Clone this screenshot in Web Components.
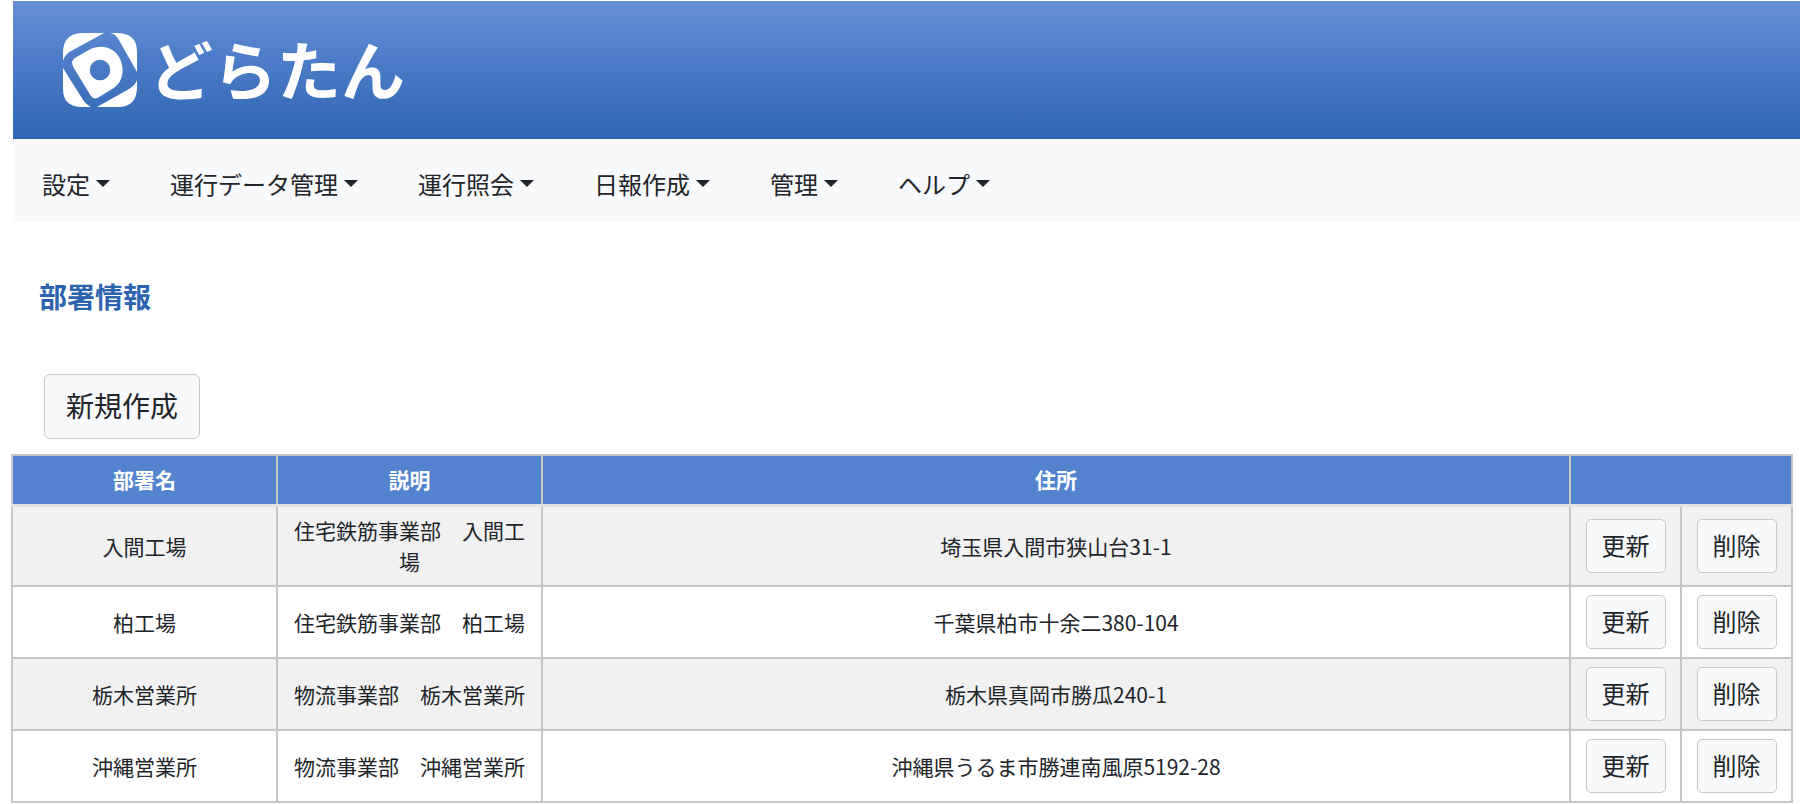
<!DOCTYPE html>
<html lang="ja">
<head>
<meta charset="utf-8">
<title>部署情報 - どらたん</title>
<style>
  body {
    margin: 0;
    background: #fff;
    color: #212529;
    font-family: "Noto Sans CJK JP", sans-serif;
    font-size: 21px;
  }
</style>
</head>
<body>
<dora-app>
  <dora-header slot="header"></dora-header>
  <dora-nav slot="nav">
    <dora-menu>設定</dora-menu>
    <dora-menu>運行データ管理</dora-menu>
    <dora-menu>運行照会</dora-menu>
    <dora-menu>日報作成</dora-menu>
    <dora-menu>管理</dora-menu>
    <dora-menu>ヘルプ</dora-menu>
  </dora-nav>
  <dora-title>部署情報</dora-title>
  <dora-toolbar><dora-button size="large">新規作成</dora-button></dora-toolbar>
  <dora-table></dora-table>
</dora-app>
<script>
  const define = (name, html, setup) => {
    const template = document.createElement('template');
    template.innerHTML = html;
    customElements.define(name, class extends HTMLElement {
      constructor() {
        super();
        const root = this.attachShadow({ mode: 'open' });
        root.append(template.content.cloneNode(true));
        if (setup) setup(root);
      }
    });
  };

  define('dora-app', `
    <style>
      :host { display: block; }
      .top { margin-left: 13px; padding-top: 1px; }
      main { padding: 0 7px 0 11px; }
    </style>
    <div class="top"><slot name="header"></slot><slot name="nav"></slot></div>
    <main><slot></slot></main>
  `);

  define('dora-header', `
    <style>
      :host { display: block; background: linear-gradient(#6690d6, #4b7bc7 45%, #2f66b1); }
      header { display: flex; height: 138px; box-sizing: border-box; padding: 0 50px; align-items: center; }
      a { display: flex; align-items: center; gap: 12px; color: #fff; text-decoration: none; }
      svg { display: block; width: 74px; height: 74px; }
      span { padding-bottom: 6px; font-size: 64px; line-height: 68px; font-weight: 700; }
    </style>
    <header>
      <a href="#" aria-label="どらたん">
        <svg viewBox="1 1 72 72" fill="#fff" aria-hidden="true">
          <path d="M41 1H19Q1 2 1 20V28Q3 22 8 19Z"/>
          <path d="M47 1H55Q73 2 73 19V39L55 7Q52 2 47 1Z"/>
          <path d="M1 35V55Q1 73 19 73H28Q24 71 21 67Z"/>
          <path d="M73 47V55Q72 73 55 73H34L66 55Q71 52 73 47Z"/>
          <path fill-rule="evenodd" d="M11 34Q8 28 13 25L27 17C43 9 59 20 59 37C59 46 55 52 48 56L35 64Q31 66 28 62ZM37 27A10 10 0 1 0 37 47A10 10 0 1 0 37 27Z"/>
        </svg>
        <span>どらたん</span>
      </a>
    </header>
  `);

  define('dora-nav', `
    <style>
      :host { display: block; background: #f8f9fb; }
      nav { display: flex; flex-wrap: wrap; align-items: center; gap: 0 60px; min-height: 83px; box-sizing: border-box; padding: 0 29px; }
    </style>
    <nav><slot></slot></nav>
  `);

  define('dora-menu', `
    <style>
      :host { display: block; }
      button { display: flex; align-items: center; gap: 6px; margin: 0; padding: 6px 0 0; border: 0; background: none; color: inherit; font: inherit; font-size: 24px; line-height: 36px; }
      button::after { content: ""; border: 7px solid transparent; border-top-color: #212529; border-bottom: 0; }
    </style>
    <button type="button" aria-haspopup="true"><slot></slot></button>
  `);

  define('dora-title', `
    <style>
      :host { display: block; padding: 54px 28px 0; }
      h1 { margin: 0; font-size: 28px; line-height: 40px; font-weight: 700; color: #2c63af; }
    </style>
    <h1><slot></slot></h1>
  `);

  define('dora-toolbar', `
    <style>:host { display: flex; padding: 58px 33px 15px; }</style>
    <slot></slot>
  `);

  define('dora-button', `
    <style>
      :host { display: inline-block; vertical-align: top; }
      button { display: block; margin: 0; padding: 8px 15px 10px; border: 1px solid #c6c8ca; border-radius: 5px; background: #f8f9fb; color: #212529; font: inherit; font-size: 24px; line-height: 34px; white-space: nowrap; }
      :host([size="large"]) button { padding: 10px 21px 13px; font-size: 28px; line-height: 40px; border-radius: 6px; }
    </style>
    <button type="button"><slot></slot></button>
  `);

  const departments = [
    ['入間工場', '住宅鉄筋事業部　入間工場', '埼玉県入間市狭山台31-1'],
    ['柏工場', '住宅鉄筋事業部　柏工場', '千葉県柏市十余二380-104'],
    ['栃木営業所', '物流事業部　栃木営業所', '栃木県真岡市勝瓜240-1'],
    ['沖縄営業所', '物流事業部　沖縄営業所', '沖縄県うるま市勝連南風原5192-28']
  ];

  define('dora-table', `
    <style>
      :host { display: block; }
      table { width: 100%; table-layout: fixed; border-collapse: collapse; text-align: center; }
      .name, .note { width: 265px; }
      .action { width: 111px; }
      th, td { border: 2px solid #c6c6c6; box-sizing: border-box; padding: 8px 14px; line-height: 31px; vertical-align: middle; }
      th { padding-bottom: 9px; background: #5383cf; color: #fff; font-weight: 700; border-bottom: 3px solid #dee2e6; }
      tbody tr:nth-child(odd) { background: #f1f1f1; }
    </style>
    <table>
      <colgroup><col class="name"><col class="note"><col><col class="action"><col class="action"></colgroup>
      <thead><tr><th scope="col">部署名</th><th scope="col">説明</th><th scope="col">住所</th><th colspan="2"></th></tr></thead>
      <tbody></tbody>
    </table>
  `, root => {
    const body = root.querySelector('tbody');
    for (const values of departments) {
      const row = body.insertRow();
      for (const value of values) row.insertCell().textContent = value;
      for (const action of ['更新', '削除']) {
        const button = document.createElement('dora-button');
        button.textContent = action;
        row.insertCell().append(button);
      }
    }
  });
</script>
</body>
</html>
